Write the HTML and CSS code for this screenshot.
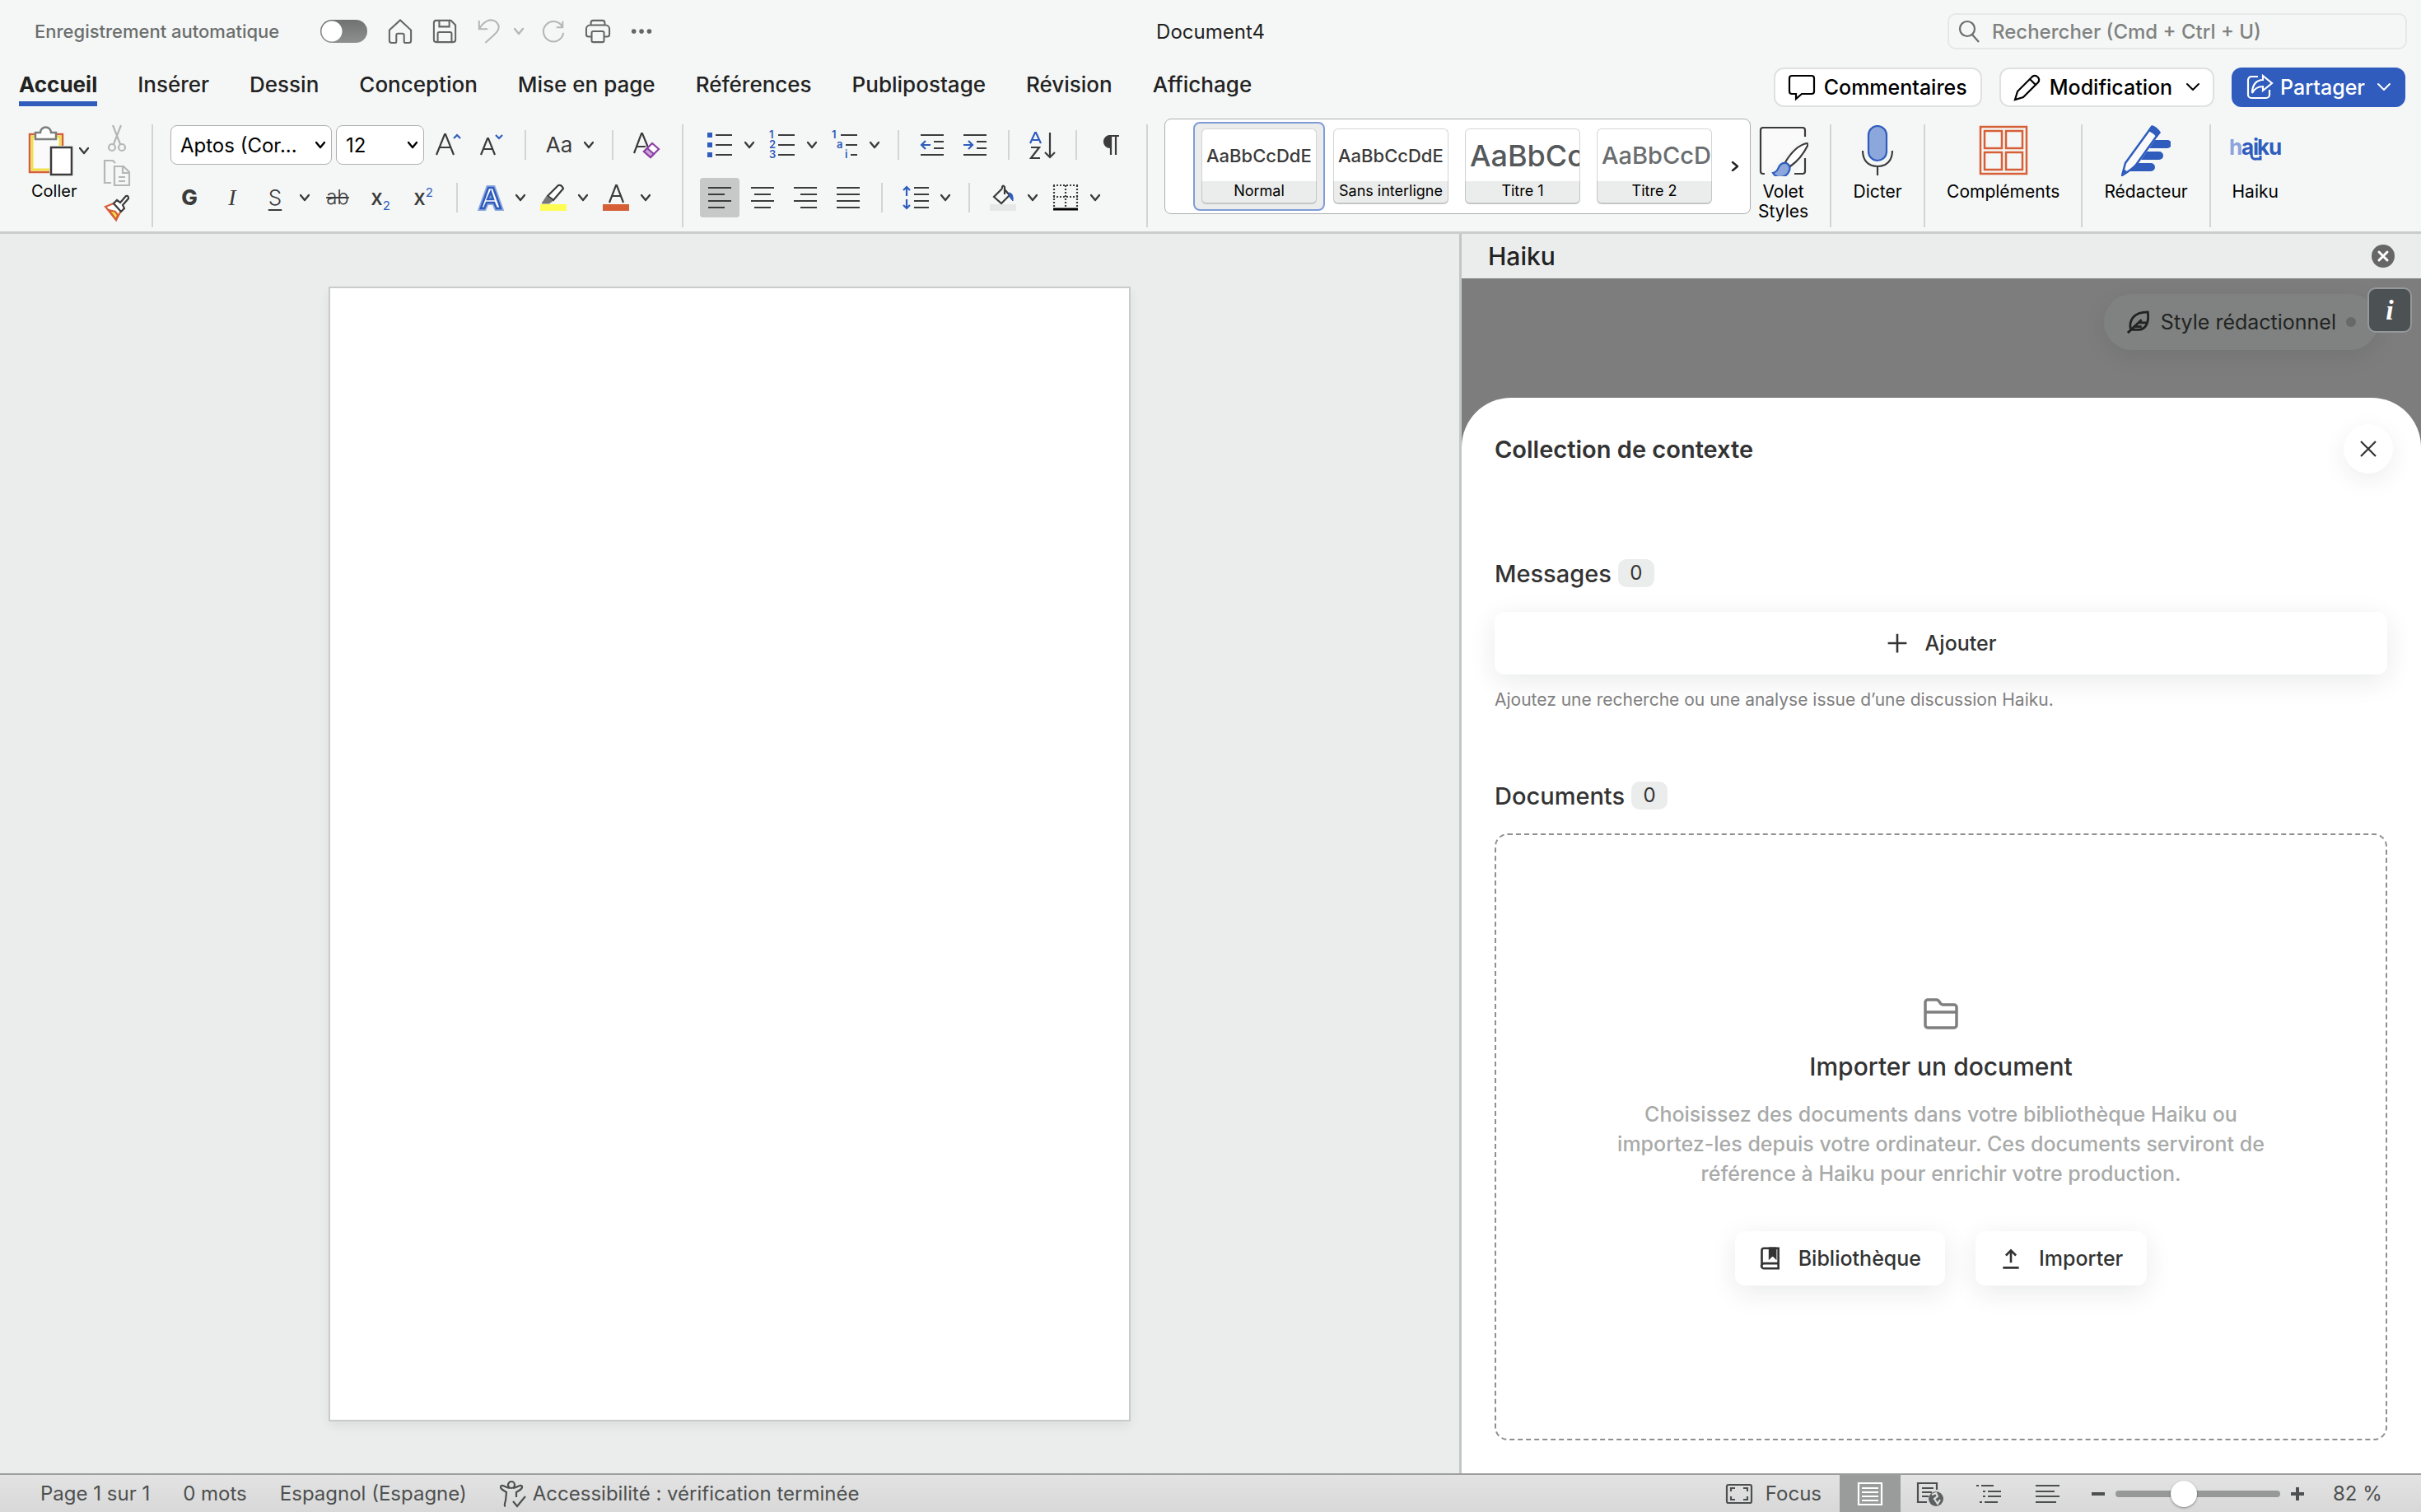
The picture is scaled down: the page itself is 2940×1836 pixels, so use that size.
FILE: index.html
```html
<!DOCTYPE html>
<html lang="fr">
<head>
<meta charset="utf-8">
<title>Document4</title>
<link rel="stylesheet" href="styles.css">
</head>
<body>
<svg class="sprite" aria-hidden="true">
  <symbol id="chev" viewBox="0 0 12 12"><path d="M1 3l5 6 5-6" fill="none" stroke="currentColor" stroke-width="2.4" stroke-linecap="round" stroke-linejoin="round"/></symbol>
  <symbol id="caret" viewBox="0 0 16 16"><path d="M1 4l7 7 7-7" fill="none" stroke="currentColor" stroke-width="2" stroke-linecap="round" stroke-linejoin="round"/></symbol>
</svg>

<header class="titlebar">
  <div class="quick">
    <label class="autosave" for="autosave">Enregistrement automatique</label>
    <input class="toggle" type="checkbox" role="switch" id="autosave">
    <button class="tool" aria-label="Accueil"><svg class="icon line" viewBox="0 0 32 32"><path d="M2 14.500L16 1.500l14 13V28a3 3 0 0 1-3 3h-4a2 2 0 0 1-2-2v-8a2 2 0 0 0-2-2h-6a2 2 0 0 0-2 2v8a2 2 0 0 1-2 2H5a3 3 0 0 1-3-3z"/></svg></button>
    <button class="tool" aria-label="Enregistrer"><svg class="icon line" viewBox="0 0 32 32"><path d="M2 5a3 3 0 0 1 3-3h19l6 6v19a3 3 0 0 1-3 3H5a3 3 0 0 1-3-3zM9 2v8h13V2M7 30V19a2 2 0 0 1 2-2h14a2 2 0 0 1 2 2v11"/></svg></button>
    <div class="combo faded"><button class="tool" aria-label="Annuler"><svg class="icon line" viewBox="0 0 32 32"><path d="M3 2v11h11M3 13C9 3 17-1 24 3c8 6 4 13-2 18l-11 10"/></svg></button><button class="drop" aria-label="Options d’annulation"><svg class="chev"><use href="#chev"/></svg></button></div>
    <button class="tool faded" aria-label="Rétablir"><svg class="icon line" viewBox="0 0 32 32"><path d="M28 3v8h-8M28 11A13 13 0 1 0 29 18"/></svg></button>
    <button class="tool" aria-label="Imprimer"><svg class="icon line" viewBox="0 0 32 32"><path d="M7 8V5a3 3 0 0 1 3-3h12a3 3 0 0 1 3 3v3M8 23H4a3 3 0 0 1-3-3v-7a5 5 0 0 1 5-5h20a5 5 0 0 1 5 5v7a3 3 0 0 1-3 3h-4M8 18a2 2 0 0 1 2-2h12a2 2 0 0 1 2 2v10a2 2 0 0 1-2 2H10a2 2 0 0 1-2-2z"/></svg></button>
    <button class="tool" aria-label="Plus"><svg class="icon solid" viewBox="0 0 32 32"><circle cx="5" cy="16" r="3"/><circle cx="15" cy="16" r="3"/><circle cx="25" cy="16" r="3"/></svg></button>
  </div>
  <h1 class="doc-name">Document4</h1>
  <div class="search">
    <svg class="icon line" viewBox="0 0 32 32" aria-hidden="true"><circle cx="12" cy="13" r="9"/><path d="M18 20l8 9"/></svg>
    <input type="search" aria-label="Rechercher" placeholder="Rechercher (Cmd + Ctrl + U)">
  </div>
</header>

<div class="tabbar">
  <nav class="tabs" aria-label="Ruban">
    <a class="current" href="#accueil">Accueil</a>
    <a href="#inserer">Insérer</a>
    <a href="#dessin">Dessin</a>
    <a href="#conception">Conception</a>
    <a href="#mise-en-page">Mise en page</a>
    <a href="#references">Références</a>
    <a href="#publipostage">Publipostage</a>
    <a href="#revision">Révision</a>
    <a href="#affichage">Affichage</a>
  </nav>
  <div class="actions">
    <button class="action"><svg class="icon line" viewBox="0 0 32 32"><path d="M4 2h24a3 3 0 0 1 3 3v16a3 3 0 0 1-3 3H16l-7 6v-6H4a3 3 0 0 1-3-3V5a3 3 0 0 1 3-3z"/></svg>Commentaires</button>
    <button class="action"><svg class="icon line" viewBox="0 0 32 32"><path d="M1 31l3-10L22 3a5 5 0 0 1 7 7L11 28zM19 6l7 7"/></svg>Modification<svg class="caret"><use href="#caret"/></svg></button>
    <button class="action primary"><svg class="icon line" viewBox="0 0 32 32"><path d="M14 3H6a4 4 0 0 0-4 4v18a4 4 0 0 0 4 4h18a4 4 0 0 0 4-4v-6M20 2l11 9-11 9v-5c-6 0-10 2-13 8 0-10 5-16 13-16z"/></svg>Partager<svg class="caret"><use href="#caret"/></svg></button>
  </div>
</div>

<section class="ribbon" aria-label="Accueil" id="accueil">
  <div class="group clipboard">
    <button class="paste">
      <span class="paste-face"><svg class="paste-icon" viewBox="0 0 56 62"><rect x="2" y="11" width="40" height="46" fill="#fafafa" stroke="#d65f38" stroke-width="2.500"/><rect x="5" y="14" width="34" height="40" fill="none" stroke="#efe04a" stroke-width="3"/><path d="M9 17V9h6a6 6 0 0 1 13 0h6v8z" fill="#fff" stroke="#7c7e7d" stroke-width="2.500"/><path d="M26 25h28v37H26z" fill="#f5f7f6"/><path d="M28 27h25v33H28z" fill="#fff" stroke="#3b3b3b" stroke-width="2.500"/></svg><svg class="chev"><use href="#chev"/></svg></span>
      <span class="paste-label">Coller</span>
    </button>
    <div class="clip-tools">
      <button class="tool faded" aria-label="Couper"><svg class="icon line" viewBox="0 0 32 32"><path d="M11 0l9 23M21 0l-9 23"/><circle cx="10" cy="27" r="4"/><circle cx="22" cy="27" r="4"/></svg></button>
      <button class="tool faded" aria-label="Copier"><svg class="icon line" viewBox="0 0 32 32"><path d="M9 28H1V1h10l3 3M13 8h11l7 7v16H13zM23 8v8h8M18 21h8M18 26h8"/></svg></button>
      <button class="tool" aria-label="Reproduire la mise en forme"><svg class="icon line" viewBox="0 0 32 32"><path d="M2 15l10-4 9 9-6 11z" fill="#fff" stroke="#d65f38"/><path d="M6 19l8 2 3 4-2 6z" fill="#efe04a" stroke="#d65f38"/><path d="M12 11l4-4 4 3 7-8q3-1 3 3l-7 8 2 4-4 4z" fill="#fff"/></svg></button>
    </div>
  </div>
  <div class="group font">
    <div class="row row-fonts">
      <div class="pickers">
        <button class="picker wide" aria-label="Police">Aptos (Cor...<svg class="chev"><use href="#chev"/></svg></button>
        <button class="picker" aria-label="Taille de police">12<svg class="chev"><use href="#chev"/></svg></button>
      </div>
      <div class="row">
        <button class="tool" aria-label="Agrandir la police"><svg class="icon line" viewBox="0 0 32 32"><path d="M1 28L11 3h1l10 25M5 19h13"/><path class="blue" d="M22 8l4-4 4 4"/></svg></button>
        <button class="tool" aria-label="Réduire la police"><svg class="icon line" viewBox="0 0 32 32"><path d="M3 28L11 8h1l8 20M6 21h11"/><path class="blue" d="M21 4l4 4 4-4"/></svg></button>
        <i class="sep"></i>
        <div class="combo"><button class="tool letter" aria-label="Modifier la casse">Aa</button><button class="drop" aria-label="Options de casse"><svg class="chev"><use href="#chev"/></svg></button></div>
        <i class="sep"></i>
        <button class="tool" aria-label="Effacer la mise en forme"><svg class="icon line" viewBox="0 0 32 32"><path d="M1 26L10 2h1l7 17M4 18h11"/><path d="M13 24l10-10 8 7-10 10z" fill="#fff" stroke="#8e3fa8"/><path d="M13 24l4-4 8 7-4 4z" fill="#c9a9d4" stroke="#8e3fa8"/></svg></button>
      </div>
    </div>
    <div class="row row-format">
      <button class="tool letter bold">G</button>
      <button class="tool letter italic">I</button>
      <div class="combo"><button class="tool letter under">S</button><button class="drop" aria-label="Styles de soulignement"><svg class="chev"><use href="#chev"/></svg></button></div>
      <button class="tool letter strike">ab</button>
      <button class="tool letter index"><span>x<sub>2</sub></span></button>
      <button class="tool letter index"><span>x<sup>2</sup></span></button>
      <i class="sep"></i>
      <div class="combo"><button class="tool" aria-label="Effets de texte"><svg class="icon" viewBox="0 0 32 32"><path d="M4 29L13 4h6l9 25h-5l-3-7h-9l-3 7zM12 18h7L16 9z" fill="#fff" stroke="#8ba7dc" stroke-width="6"/><path d="M4 29L13 4h6l9 25h-5l-3-7h-9l-3 7zM12 18h7L16 9z" fill="#fff" stroke="#2f5cbd" stroke-width="2.500"/></svg></button><button class="drop" aria-label="Options d’effets"><svg class="chev"><use href="#chev"/></svg></button></div>
      <div class="combo"><button class="tool" aria-label="Surlignage"><svg class="icon line" viewBox="0 0 32 32"><path d="M9 14L22 1q4-1 6 4L16 19l-7-5z" fill="#fff"/><path d="M8 14l7 6-4 3H2z" fill="#777" stroke="#777" stroke-width="1"/><path d="M0 24h32v8H0z" fill="#fffd54" stroke="none"/></svg></button><button class="drop" aria-label="Couleur de surlignage"><svg class="chev"><use href="#chev"/></svg></button></div>
      <div class="combo"><button class="tool" aria-label="Couleur de police"><svg class="icon line" viewBox="0 0 32 32"><path d="M8 22L16 1h1l8 21M11 14h11"/><path d="M0 24h32v8H0z" fill="#d65f38" stroke="none"/></svg></button><button class="drop" aria-label="Choix de couleur"><svg class="chev"><use href="#chev"/></svg></button></div>
    </div>
  </div>
  <div class="group para">
    <div class="row">
      <div class="combo"><button class="tool" aria-label="Puces"><svg class="icon line" viewBox="0 0 32 32"><path d="M11 4h20M11 16h20M11 28h20"/><path d="M1 1h6v6H1zM1 13h6v6H1zM1 25h6v6H1z" fill="#2f5cbd" stroke="none"/></svg></button><button class="drop" aria-label="Options de puces"><svg class="chev"><use href="#chev"/></svg></button></div>
      <div class="combo"><button class="tool" aria-label="Numérotation"><svg class="icon line" viewBox="0 0 32 32"><path d="M11 4h20M11 16h20M11 28h20"/><g class="num"><text x="0" y="8">1</text><text x="0" y="20">2</text><text x="0" y="32">3</text></g></svg></button><button class="drop" aria-label="Options de numérotation"><svg class="chev"><use href="#chev"/></svg></button></div>
      <div class="combo"><button class="tool" aria-label="Liste à plusieurs niveaux"><svg class="icon line" viewBox="0 0 32 32"><path d="M11 4h20M17 16h14M23 28h8"/><g class="num"><text x="0" y="8">1</text><text x="6" y="20">a</text><text x="16" y="32">i</text></g></svg></button><button class="drop" aria-label="Options de liste"><svg class="chev"><use href="#chev"/></svg></button></div>
      <i class="sep"></i>
      <button class="tool" aria-label="Diminuer le retrait"><svg class="icon line" viewBox="0 0 32 32"><path d="M2 4h28M18 12h12M18 20h12M2 28h28"/><path class="blue" d="M14 16H3m5-5l-5 5 5 5"/></svg></button>
      <button class="tool" aria-label="Augmenter le retrait"><svg class="icon line" viewBox="0 0 32 32"><path d="M2 4h28M18 12h12M18 20h12M2 28h28"/><path class="blue" d="M2 16h11m-5-5l5 5-5 5"/></svg></button>
      <i class="sep"></i>
      <button class="tool" aria-label="Trier"><svg class="icon line" viewBox="0 0 32 32"><path class="blue" d="M1 14L7 1h1l6 13M4 10h7"/><path d="M2 19h10L2 32h11M25 1v30m-6-6l6 6 6-6"/></svg></button>
      <i class="sep"></i>
      <button class="tool" aria-label="Afficher les marques"><svg class="icon line" viewBox="0 0 32 32"><path d="M16 5a7 7 0 0 0 0 14z" fill="currentColor"/><path d="M14 5h13M17 5v23M23 5v23"/></svg></button>
    </div>
    <div class="row">
      <button class="tool active" aria-label="Aligner à gauche"><svg class="icon line" viewBox="0 0 32 32"><path d="M2 4h28M2 12h20M2 20h28M2 28h20"/></svg></button>
      <button class="tool" aria-label="Centrer"><svg class="icon line" viewBox="0 0 32 32"><path d="M2 4h28M6 12h20M2 20h28M6 28h20"/></svg></button>
      <button class="tool" aria-label="Aligner à droite"><svg class="icon line" viewBox="0 0 32 32"><path d="M2 4h28M10 12h20M2 20h28M10 28h20"/></svg></button>
      <button class="tool" aria-label="Justifier"><svg class="icon line" viewBox="0 0 32 32"><path d="M2 4h28M2 12h28M2 20h28M2 28h28"/></svg></button>
      <i class="sep"></i>
      <div class="combo"><button class="tool" aria-label="Interligne"><svg class="icon line" viewBox="0 0 32 32"><path d="M14 4h18M14 12h18M14 20h18M14 28h18"/><path class="blue" d="M5 14V3M1 7l4-4 4 4M5 18v11m-4-4l4 4 4-4"/></svg></button><button class="drop" aria-label="Options d’interligne"><svg class="chev"><use href="#chev"/></svg></button></div>
      <i class="sep"></i>
      <div class="combo"><button class="tool" aria-label="Trame de fond"><svg class="icon line" viewBox="0 0 32 32"><path d="M0 24h32v8H0z" fill="#e6e8e7" stroke="none"/><path d="M15 5L5 15l9 8 10-10-6-7v6M15 5V3q1-3 3 0v4"/><path d="M23 10q6 0 5 10-4-3-5-10z" fill="#2f5cbd" stroke="#2f5cbd" stroke-width="1"/></svg></button><button class="drop" aria-label="Couleur de trame"><svg class="chev"><use href="#chev"/></svg></button></div>
      <div class="combo"><button class="tool" aria-label="Bordures"><svg class="icon line" viewBox="0 0 32 32"><path d="M2 1v26M16 1v26M30 1v26M1 1h30M1 15h30" stroke-dasharray="2 2"/><path d="M1 30h30" stroke="#000" stroke-width="3"/></svg></button><button class="drop" aria-label="Options de bordures"><svg class="chev"><use href="#chev"/></svg></button></div>
    </div>
  </div>
  <div class="group styles">
    <div class="gallery">
      <button class="style chosen"><span class="sample">AaBbCcDdE</span><span class="style-name">Normal</span></button>
      <button class="style"><span class="sample">AaBbCcDdE</span><span class="style-name">Sans interligne</span></button>
      <button class="style"><span class="sample title-1">AaBbCc</span><span class="style-name">Titre 1</span></button>
      <button class="style"><span class="sample title-2">AaBbCcD</span><span class="style-name">Titre 2</span></button>
      <button class="more" aria-label="Plus de styles"><svg class="chev turned"><use href="#chev"/></svg></button>
    </div>
    <button class="big pane"><svg class="big-icon line" viewBox="0 0 60 62"><path d="M7 59H5a3 3 0 0 1-3-3V6a3 3 0 0 1 3-3h48a3 3 0 0 1 3 3v8M56 40v16a3 3 0 0 1-3 3H43" fill="#fafafa"/><path d="M32 45q12-20 26-23 2 0 1 3-8 16-21 25z" fill="#fff"/><path d="M17 58q5-1 7-7 3-6 9-5 6 3 4 9-3 8-11 8-6 0-9-5z" fill="#8ba7dc" stroke="#2f5cbd"/></svg>Volet<br>Styles</button>
  </div>
  <div class="group"><button class="big"><svg class="big-icon line" viewBox="0 0 60 62"><rect x="19" y="1" width="22" height="42" rx="11" fill="#8ba7dc" stroke="#2f5cbd"/><path d="M12 31c0 12 7 19 18 19s18-7 18-19M30 50v11"/></svg>Dicter</button></div>
  <div class="group"><button class="big"><svg class="big-icon" viewBox="0 0 60 62"><path d="M2 2h56v57H2zM7 7h21v21H7zM33 7h20v21H33zM7 33h21v21H7zM33 33h20v21H33z" fill="none" stroke="#d65f38" stroke-width="2.500"/></svg>Compléments</button></div>
  <div class="group"><button class="big"><svg class="big-icon" viewBox="0 0 60 62"><path d="M41 18h15a5 5 0 0 1 0 10H34zM31 32h15a5 5 0 0 1 0 10H24zM20 46h16a5 5 0 0 1 0 10H10z" fill="#2f5cbd"/><path d="M1 61L5 46 37 2l9 7-28 39Q14 53 1 61z" fill="#fafafa" stroke="#2f5cbd" stroke-width="2.500" stroke-linejoin="round"/><path d="M32 7l5-7q7 2 11 9l-5 6q-4-6-11-8zM0 62l3-9 5 4z" fill="#2f5cbd"/></svg>Rédacteur</button></div>
  <div class="group"><button class="big last"><svg class="big-icon haiku-logo" viewBox="0 0 60 62" aria-hidden="true"><text x="-2" y="36" fill="#8ba3de">h</text><text x="13" y="36">a</text><text x="27" y="36">i</text><text x="32" y="36">k</text><text x="46" y="36">u</text><path d="M25 35q0 7 6 6h5v-4" fill="none" stroke="#2f5cbd" stroke-width="3"/></svg>Haiku</button></div>
</section>

<main class="workspace">
  <section class="canvas" aria-label="Document"><article class="sheet"></article></section>
  <aside class="panel">
    <header class="panel-head"><h2>Haiku</h2><button class="panel-close" aria-label="Fermer le volet"><svg viewBox="0 0 28 28"><circle cx="14" cy="14" r="14" fill="#666"/><path d="M9 9l10 10M19 9L9 19" stroke="#fff" stroke-width="3" stroke-linecap="round"/></svg></button></header>
    <div class="addin">
      <div class="shade">
        <button class="tone"><svg class="icon line" viewBox="0 0 32 32"><path d="M2 30L20 13M6 26C3 15 9 3 28 3c2 14-3 23-12 23zM10 22h10M15 17h11"/></svg>Style rédactionnel<i class="dot"></i></button>
        <button class="info" aria-label="Informations">i</button>
      </div>
      <section class="drawer">
        <header class="drawer-head"><h3>Collection de contexte</h3><button class="round" aria-label="Fermer"><svg class="icon line" viewBox="0 0 32 32"><path d="M7 7l18 18M25 7L7 25"/></svg></button></header>
        <h4 class="count-title">Messages <span class="badge">0</span></h4>
        <button class="card-btn add"><svg class="icon line" viewBox="0 0 32 32"><path d="M16 3v26M3 16h26"/></svg>Ajouter</button>
        <p class="hint">Ajoutez une recherche ou une analyse issue d’une discussion Haiku.</p>
        <h4 class="count-title">Documents <span class="badge">0</span></h4>
        <div class="dropzone">
          <svg class="folder" viewBox="0 0 44 40"><path d="M3 6a3 3 0 0 1 3-3h10a4 4 0 0 1 3 1l3 4a4 4 0 0 0 3 1h13a3 3 0 0 1 3 3v22a3 3 0 0 1-3 3H6a3 3 0 0 1-3-3zM3 18h38" fill="none" stroke="#7f7f7f" stroke-width="3.500"/></svg>
          <h5>Importer un document</h5>
          <p>Choisissez des documents dans votre bibliothèque Haiku ou<br>importez-les depuis votre ordinateur. Ces documents serviront de<br>référence à Haiku pour enrichir votre production.</p>
          <div class="choices">
            <button class="card-btn"><svg class="icon line" viewBox="0 0 32 32"><path d="M4 27V5a3 3 0 0 1 3-3h20v28H7a3 3 0 0 1 0-7h20"/><path d="M15 2h8v13l-4-4-4 4z" fill="currentColor"/></svg>Bibliothèque</button>
            <button class="card-btn"><svg class="icon line" viewBox="0 0 32 32"><path d="M16 22V5m-7 7l7-7 7 7M5 29h22"/></svg>Importer</button>
          </div>
        </div>
      </section>
    </div>
  </aside>
</main>

<footer class="status">
  <div class="facts">
    <span>Page 1 sur 1</span>
    <span>0 mots</span>
    <span>Espagnol (Espagne)</span>
    <span class="access"><svg class="icon line" viewBox="0 0 32 32"><circle cx="14" cy="5" r="4"/><path d="M12 9C7 8 2 4 1 7s4 5 7 7l-1 10c-1 3-2 7 0 7M16 9c5-1 10-5 11-2s-4 5-7 7v6M16 25l5 6 10-12"/></svg>Accessibilité : vérification terminée</span>
  </div>
  <div class="views">
    <button class="view focus"><svg class="icon line" viewBox="0 0 32 32"><rect x="1" y="5" width="30" height="22" rx="2"/><path d="M6 13v-4h5M21 9h5v4M6 19v4h5M21 23h5v-4"/></svg>Focus</button>
    <button class="view on" aria-label="Page"><svg class="icon line" viewBox="0 0 32 32"><path d="M2 3h28v26H2zM6 9h20M6 14h20M6 19h20M6 24h20"/></svg></button>
    <button class="view" aria-label="Web"><svg class="icon line" viewBox="0 0 32 32"><path d="M12 26H1V3h23v8M6 9h14M6 14h12M6 19h8"/><circle cx="23" cy="22" r="9" fill="#5d6060" stroke="none"/><path d="M18 17l5-2 2 4-4 3 4 6 3-5" stroke="#ddd"/></svg></button>
    <button class="view" aria-label="Plan"><svg class="icon line" viewBox="0 0 32 32"><path d="M1 6h3M7 6h15M9 13h3M15 13h16M9 19h3M15 19h16M5 26h3M11 26h16"/></svg></button>
    <button class="view" aria-label="Brouillon"><svg class="icon line" viewBox="0 0 32 32"><path d="M2 6h29M2 13h23M2 19h29M2 26h25"/></svg></button>
    <div class="zoom">
      <button aria-label="Zoom arrière"><svg viewBox="0 0 18 18"><path d="M1 9h16" stroke="currentColor" stroke-width="4"/></svg></button>
      <input type="range" aria-label="Zoom" min="0" max="100" value="40">
      <button aria-label="Zoom avant"><svg viewBox="0 0 18 18"><path d="M1 9h16M9 1v16" stroke="currentColor" stroke-width="4"/></svg></button>
      <output>82 %</output>
    </div>
  </div>
</footer>
</body>
</html>
```
FILE: styles.css
```css
*, *::before, *::after { box-sizing: border-box; }

body {
  margin: 0;
  min-height: 100vh;
  display: flex;
  flex-direction: column;
  font-family: Inter, "Liberation Sans", sans-serif;
  font-size: 22px;
  color: #222;
  background: #f5f7f6;
}
button, input { font: inherit; color: inherit; }
button { margin: 0; padding: 0; border: 0; background: none; white-space: nowrap; }
h1, h2, h3, h4, h5, p { margin: 0; font-weight: 500; }
a { color: inherit; text-decoration: none; }
svg { display: block; flex: none; }
.sprite { position: absolute; width: 0; height: 0; }

.icon { width: 32px; height: 32px; overflow: visible; }
.line { fill: none; stroke: currentColor; stroke-width: 2.2; }
.solid { fill: currentColor; }
.blue { stroke: #2f5cbd; }
.chev { width: 12px; height: 12px; }
.turned { transform: rotate(-90deg); }
.caret { width: 16px; height: 16px; }
.num { fill: #2f5cbd; stroke: none; font-size: 13px; font-weight: 600; }

/* Title bar */
.titlebar {
  display: grid;
  grid-template-columns: 1fr auto 1fr;
  align-items: center;
  height: 76px;
  padding: 0 17px;
}
.quick { display: flex; align-items: center; gap: 22px; padding-left: 25px; color: #636665; }
.autosave { width: 325px; font-weight: 500; color: #6b6e6d; white-space: nowrap; }
.quick .icon { width: 30px; height: 30px; }
.toggle {
  appearance: none;
  width: 57px;
  height: 28px;
  margin: 0 2px 0 0;
  border-radius: 14px;
  background: radial-gradient(circle at 14px 14px, #fff 12px, transparent 13px), linear-gradient(#6f7271, #8d908f);
}
.doc-name { font-size: 24px; font-weight: 400; }
.search {
  justify-self: end;
  display: flex;
  align-items: center;
  gap: 10px;
  width: 558px;
  height: 44px;
  padding: 0 10px;
  border: 2px solid #e6e8e7;
  border-radius: 10px;
  color: #6b6e6d;
}
.search input { flex: 1; min-width: 0; padding: 0; border: 0; background: none; font-size: 24px; font-weight: 500; outline: 0; }
.search input::placeholder { color: #808281; opacity: 1; }

.tool { display: flex; align-items: center; justify-content: center; width: 32px; height: 32px; }
.drop { width: 12px; height: 32px; display: flex; align-items: center; }
.faded { color: #b4b7b6; }

/* Tabs */
.tabbar { display: flex; justify-content: space-between; align-items: center; height: 60px; padding: 0 19px 0 23px; }
.tabs { display: flex; gap: 49px; font-size: 26px; font-weight: 500; line-height: 32px; }
.tabs a { padding: 4px 0; border-bottom: 6px solid transparent; }
.tabs .current { font-weight: 700; border-image: linear-gradient(#2f5cbd, #2f5cbd) 1; }
.actions { display: flex; gap: 21px; }
.action {
  display: flex;
  align-items: center;
  gap: 11px;
  height: 48px;
  padding: 0 16px;
  border: 2px solid #dfe1e0;
  border-radius: 12px;
  background: #fff;
  color: #000;
  font-size: 25px;
  font-weight: 500;
}
.action .caret { margin-left: 6px; }
.action.primary { gap: 9px; border-color: #2f5cbd; background: #2f5cbd; color: #fff; }

/* Ribbon */
.ribbon {
  display: flex;
  align-items: flex-start;
  height: 148px;
  padding-top: 8px;
  border-bottom: 3px solid #cbcdcc;
  color: #3b3b3b;
}
.group { height: 132px; padding-top: 8px; border-right: 2px solid #d3d5d4; border-image: linear-gradient(transparent 8px, #d3d5d4 8px) 1; }
.group:last-child { border-right: 0; }
.clipboard { display: flex; gap: 18px; width: 186px; padding-left: 34px; }
.paste { display: flex; flex-direction: column; gap: 6px; align-items: flex-start; height: 96px; color: #000; font-size: 20px; }
.paste-face { display: flex; align-items: center; gap: 6px; color: #3b3b3b; }
.paste-label { padding-left: 4px; }
.paste-icon { width: 56px; height: 62px; }
.clip-tools { display: flex; flex-direction: column; gap: 10px; }
.font { display: flex; flex-direction: column; gap: 16px; width: 644px; padding-left: 21px; }
.para { display: flex; flex-direction: column; gap: 16px; width: 564px; padding-left: 28px; }
.row { display: flex; align-items: center; gap: 20px; height: 48px; }
.row-fonts { gap: 14px; }
.row-format { padding-left: 7px; }
.sep { width: 2px; height: 36px; margin: 0 4px; background: #d3d5d4; }
.combo { display: flex; gap: 14px; margin-right: -2px; }
.pickers { display: flex; gap: 5px; }
.picker {
  display: flex;
  justify-content: space-between;
  align-items: center;
  width: 107px;
  height: 48px;
  padding: 0 7px 0 11px;
  border: 1px solid #aeb0af;
  border-radius: 8px;
  background: #fff;
  color: #000;
  font-size: 24px;
}
.picker.wide { width: 196px; }
.letter { font-size: 26px; line-height: 32px; }
.bold { font-weight: 800; }
.italic { font-family: "Liberation Serif", serif; font-style: italic; font-size: 28px; }
.under { font-weight: 300; text-decoration: underline; text-underline-offset: 5px; }
.strike { font-size: 24px; font-weight: 300; text-decoration: line-through; }
.index { font-weight: 500; }
.index sub, .index sup { font-size: 15px; font-weight: 400; color: #2f5cbd; line-height: 0; }
.active { border-radius: 1px; background: #c7c9c8; box-shadow: 0 0 0 8px #c7c9c8; }

/* Style gallery */
.styles { display: flex; padding: 0 0 0 20px; }
.gallery {
  display: flex;
  align-items: center;
  width: 712px;
  height: 116px;
  padding-left: 34px;
  border: 1px solid #aeb0af;
  border-radius: 8px;
  background: #fff;
}
.style { display: flex; flex-direction: column; width: 160px; height: 108px; padding: 8px 10px; }
.style.chosen { padding: 6px 8px; border: 2px solid #7f9cd8; border-radius: 8px; background: #ebedec; }
.sample {
  display: flex;
  align-items: center;
  width: 140px;
  height: 64px;
  padding: 0 5px;
  border: solid #d3d5d4;
  border-width: 1px 1px 0;
  border-radius: 6px 6px 0 0;
  background: #fff;
  overflow: hidden;
  font-size: 22px;
  font-weight: 500;
}
.title-1 { font-size: 36px; color: #55595b; }
.title-2 { font-size: 29px; color: #6a6d6f; }
.style-name {
  width: 140px;
  height: 28px;
  border: solid #c4c6c5;
  border-width: 0 1px 2px;
  border-radius: 0 0 6px 6px;
  background: #ebedec;
  color: #000;
  font-size: 18px;
  line-height: 24px;
  text-align: center;
}
.more { margin: 0 auto; color: #222; }

.big { display: flex; flex-direction: column; align-items: center; gap: 7px; padding: 0 26px; color: #000; font-size: 21px; line-height: 24px; }
.big-icon { width: 60px; height: 62px; color: #3b3b3b; }
.pane { padding: 8px 26px 0 9px; }
.last { padding: 0 24px; }
.haiku-logo { fill: #2f5cbd; font-size: 26px; font-weight: 700; overflow: visible; }

/* Workspace */
.workspace { flex: 1; display: flex; background: #ebedec; }
.canvas { flex: 1; padding: 64px 0 48px; }
.sheet { width: 55%; aspect-ratio: 974 / 1377; margin: 0 auto; border: 2px solid #c9cbca; background: #fff; box-shadow: 0 6px 12px #0000000f; }
.panel { display: flex; flex-direction: column; width: 1168px; border-left: 3px solid #c4c6c5; }
.panel-head { display: flex; justify-content: space-between; align-items: center; height: 54px; padding: 0 32px; }
.panel-head h2 { font-size: 30px; }
.panel-close svg { width: 28px; height: 28px; }
.addin { flex: 1; display: flex; flex-direction: column; background: #7d7d7d; color: #333; }
.shade { display: flex; justify-content: flex-end; align-items: flex-start; height: 145px; padding: 11px 11px 0 0; }
.tone {
  display: flex;
  align-items: center;
  gap: 12px;
  height: 68px;
  margin: 8px -13px 0 0;
  padding: 0 27px;
  border-radius: 34px;
  background: #7f8280;
  box-shadow: 0 8px 28px #00000014;
  color: #222;
  font-size: 25px;
}
.dot { width: 12px; height: 12px; border-radius: 50%; background: #666968; }
.tone .icon { width: 30px; height: 30px; stroke-width: 3; }
.info {
  position: relative;
  width: 54px;
  height: 55px;
  border: 2px solid #94989a;
  border-radius: 10px;
  background: #4c5154;
  color: #fff;
  font: italic 700 34px "Liberation Serif", serif;
}
.drawer { flex: 1; display: flex; flex-direction: column; padding: 32px 41px 40px 40px; border-radius: 60px 60px 0 0; background: #fff; }
.drawer-head { display: flex; justify-content: space-between; align-items: center; margin-bottom: 104px; }
.drawer-head h3 { font-size: 29px; font-weight: 600; }
.round { display: flex; align-items: center; justify-content: center; width: 60px; height: 60px; margin-right: -7px; border-radius: 50%; background: #fff; box-shadow: 0 8px 28px #00201014; }
.count-title { display: flex; align-items: center; gap: 8px; height: 34px; font-size: 29px; }
.badge { width: 44px; height: 34px; border-radius: 10px; background: #ebedec; font-size: 24px; font-weight: 400; line-height: 34px; text-align: center; }
.card-btn {
  display: flex;
  align-items: center;
  justify-content: center;
  gap: 20px;
  height: 66px;
  padding: 0 29px;
  border-radius: 12px;
  background: #fff;
  box-shadow: 0 8px 32px #00201018;
  font-size: 25px;
  font-weight: 500;
}
.card-btn .icon { width: 28px; height: 28px; stroke-width: 3; }
.add { height: 76px; margin: 30px 0 18px; }
.hint { margin-bottom: 86px; color: #7f7f7f; font-size: 21px; font-weight: 400; line-height: 26px; }
.dropzone {
  flex: 1;
  display: flex;
  flex-direction: column;
  align-items: center;
  justify-content: center;
  margin-top: 29px;
  padding-top: 10px;
  border: 2px dashed #8f8f8f;
  border-radius: 16px;
  text-align: center;
}
.folder { width: 44px; height: 40px; }
.dropzone h5 { margin: 26px 0 22px; font-size: 30px; line-height: 36px; }
.dropzone p { color: #a8aaa9; font-size: 25px; line-height: 36px; }
.choices { display: flex; gap: 37px; margin-top: 52px; }

/* Status bar */
.status {
  display: flex;
  justify-content: space-between;
  height: 47px;
  padding: 0 49px;
  border-top: 2px solid #9c9e9d;
  background: linear-gradient(#e3e3e3, #d8d8d8);
  color: #4d5050;
  font-size: 24px;
}
.facts { display: flex; align-items: center; gap: 40px; }
.access { display: flex; align-items: center; gap: 8px; }
.views { display: flex; }
.view { display: flex; align-items: center; justify-content: center; gap: 16px; width: 71px; }
.view.focus { width: auto; margin-right: 22px; }
.view.on { width: 74px; background: #9a9c9b; color: #fff; }
.zoom { display: flex; align-items: center; gap: 12px; margin-left: 18px; }
.zoom svg { width: 18px; height: 18px; }
.zoom output { width: 58px; margin-left: 22px; white-space: nowrap; }
.zoom input { appearance: none; width: 200px; height: 32px; margin: 0; background: none; }
.zoom input::-webkit-slider-runnable-track { height: 8px; border-radius: 4px; background: #979998; }
.zoom input::-webkit-slider-thumb { appearance: none; width: 32px; height: 32px; margin-top: -12px; border-radius: 50%; background: #fff; box-shadow: 0 1px 3px #0006; }
```
